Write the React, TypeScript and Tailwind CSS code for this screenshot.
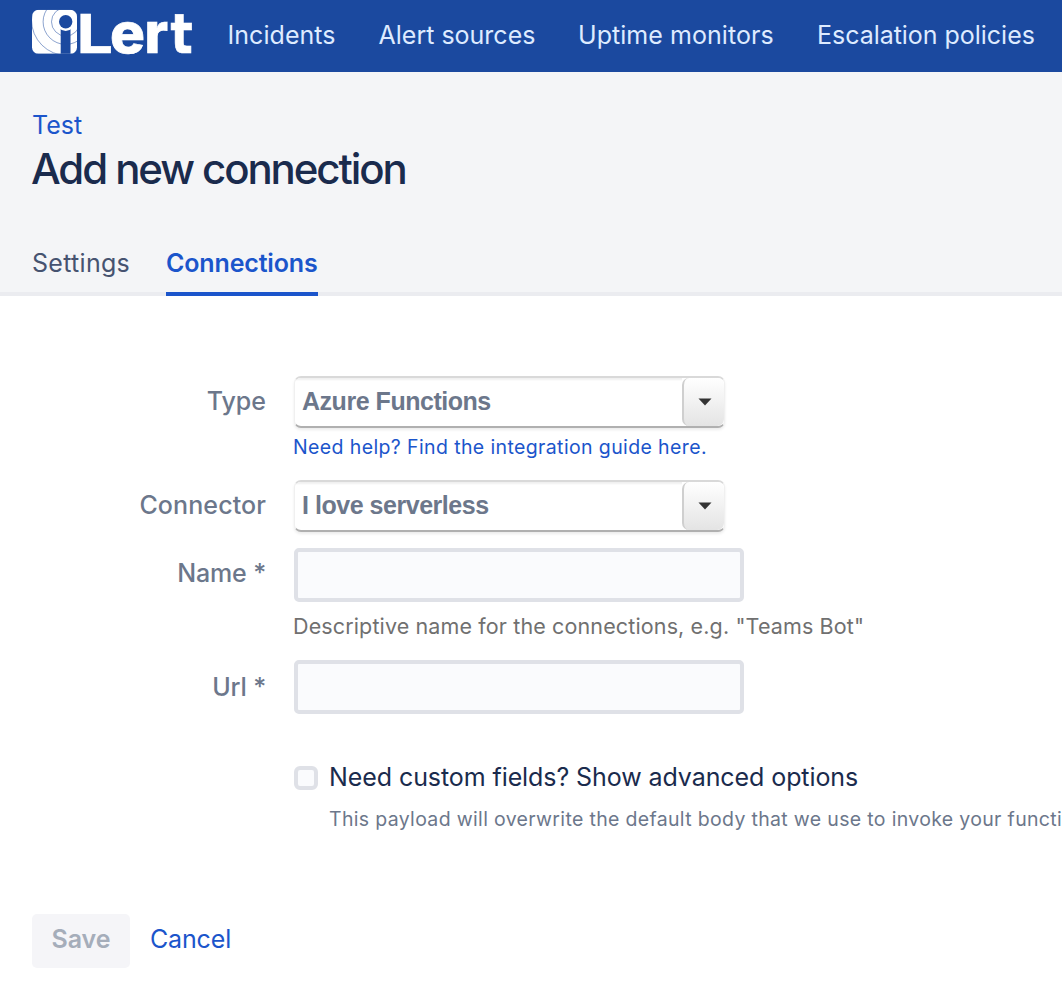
import type { ReactNode } from "react";

function Logo() {
  return (
    <svg width="163" height="72" viewBox="32 0 163 72" aria-label="iLert" className="shrink-0 overflow-visible">
      <defs>
        <clipPath id="mark">
          <rect x="32" y="9.8" width="45" height="44" rx="6.5" />
        </clipPath>
      </defs>
      <g clipPath="url(#mark)">
        <rect x="32" y="9.8" width="45" height="44" fill="#fff" />
        <g fill="none" stroke="#1b499f" strokeOpacity="0.5" strokeWidth="1">
          <circle cx="65.7" cy="21.8" r="14.2" />
          <circle cx="65.7" cy="21.8" r="22.6" />
          <circle cx="67" cy="20" r="35.5" />
        </g>
        <rect x="60.7" y="28" width="9.8" height="27" fill="#1b499f" />
        <circle cx="65.7" cy="21.8" r="9.2" fill="#fff" />
        <circle cx="65.7" cy="21.8" r="6.7" fill="#1b499f" />
      </g>
      <g fill="#fff" stroke="#fff" strokeWidth="0.7" fontFamily="Inter, sans-serif" fontWeight="800">
        <text x="76.8" y="53.2" fontSize="53" fontWeight="700" textLength="36" lengthAdjust="spacingAndGlyphs">L</text>
        <text x="110" y="53.2" fontSize="56" textLength="35" lengthAdjust="spacingAndGlyphs">e</text>
        <text x="144.5" y="53.2" fontSize="56">r</text>
        <text x="170.6" y="53.2" fontSize="55" fontFamily="'DejaVu Sans', sans-serif" fontWeight="700" textLength="22.2" lengthAdjust="spacingAndGlyphs">t</text>
      </g>
    </svg>
  );
}

function Row({ label, labelClass, className, children }: { label: string; labelClass: string; className: string; children: ReactNode }) {
  return (
    <div className={`flex items-start gap-7 ${className}`}>
      <label className={`w-[266px] shrink-0 text-right font-medium leading-8 text-[#6c778b] ${labelClass}`}>{label}</label>
      <div className="flex flex-col items-start">{children}</div>
    </div>
  );
}

function Combo({ value }: { value: string }) {
  return (
    <button className="flex h-[52px] w-[431px] items-stretch overflow-hidden rounded-[7px] border-x border-t-2 border-b-2 border-x-[#f0f0f0] border-t-[#d9d9d9] border-b-[#b0b0b0] bg-white text-left shadow-[0_2px_3px_rgba(0,0,0,0.08)]">
      <span className="flex-1 pl-[7px] font-['Liberation_Sans',sans-serif] text-[25px] font-bold leading-[47px] tracking-[-0.47px] text-[#6c778b] shadow-[inset_0_3px_2px_-1px_#f0f0f0]">
        {value}
      </span>
      <span className="flex w-[42px] items-center justify-center rounded-[7px] border-l-2 border-[#cfcfcf] bg-linear-to-b from-white to-[#e4e4e4]">
        <svg width="14" height="8" viewBox="0 0 14 8" className="ml-0.5">
          <path d="M0.5 0.5h13L7 7.5z" fill="#333" />
        </svg>
      </span>
    </button>
  );
}

function TextField() {
  return <input className="h-[54px] w-[450px] rounded-[5px] border-4 border-[#dfe1e7] bg-[#fafbfd] px-3 outline-none" />;
}

export default function App() {
  return (
    <div className="h-[982px] w-[1062px] overflow-hidden bg-white font-[Inter,sans-serif] text-[25px]">
      <header className="flex h-[72px] items-center bg-[#1b499f] pl-8 leading-8 whitespace-nowrap text-[#deebff]">
        <Logo />
        <nav className="flex items-center pb-0.5">
          <a className="ml-[32.5px] w-[151px] tracking-[0.05px]">Incidents</a>
          <a className="w-[199.5px]">Alert sources</a>
          <a className="w-[239px] tracking-[0.05px]">Uptime monitors</a>
          <a className="tracking-[-0.03px]">Escalation policies</a>
        </nav>
      </header>

      <section className="flex h-56 flex-col border-b-4 border-[#ebecf0] bg-[#f4f5f7] px-8 pt-[37px]">
        <a className="leading-8 text-[#1b55cb]">Test</a>
        <h1 className="mt-1 -ml-px text-[42px] leading-[48px] font-[450] tracking-[-2.1px] text-[#1a2b4d]">Add new connection</h1>
        <div className="mt-[54px] flex gap-9 leading-8">
          <a className="w-[98px] tracking-[0.3px] text-[#465370]">Settings</a>
          <a className="h-[49px] w-[152px] shrink-0 border-b-4 border-[#1b55cb] font-semibold tracking-[-0.15px] whitespace-nowrap text-[#1b55cb]">
            Connections
          </a>
        </div>
      </section>

      <main className="pt-20">
        <Row label="Type" labelClass="pt-[9px]" className="h-[104px]">
          <Combo value="Azure Functions" />
          <a className="mt-[7px] -ml-px text-[19.5px] leading-6 tracking-[0.38px] whitespace-nowrap text-[#1b55cb]">
            Need help? Find the integration guide here.
          </a>
        </Row>
        <Row label="Connector" labelClass="pt-[9px] tracking-[0.1px]" className="h-[68px]">
          <Combo value="I love serverless" />
        </Row>
        <Row label="Name *" labelClass="pt-[9px] tracking-[-0.15px]" className="h-28">
          <TextField />
          <p className="mt-2.5 -ml-px text-[21.5px] leading-7 tracking-[0.13px] whitespace-nowrap text-[#707070]">
            Descriptive name for the connections, e.g. "Teams Bot"
          </p>
        </Row>
        <Row label="Url *" labelClass="pt-[11px] tracking-[-0.15px]" className="h-[101px]">
          <TextField />
        </Row>
        <div className="ml-[294px] flex gap-[11px]">
          <span className="mt-[5px] size-6 shrink-0 rounded-[6px] border-4 border-[#dfe1e7] bg-[#fafbfd]" />
          <div className="whitespace-nowrap">
            <p className="leading-8 tracking-[-0.08px] text-[#1a2b4d]">Need custom fields? Show advanced options</p>
            <p className="mt-3.5 text-[19.5px] leading-6 tracking-[0.33px] text-[#6c778b]">
              This payload will overwrite the default body that we use to invoke your functi
            </p>
          </div>
        </div>
        <div className="mt-[83px] flex items-center pl-8">
          <button className="h-[54px] w-[98px] rounded-[5px] bg-[#f5f5f8] pb-[3px] font-semibold text-[#a5adba]">Save</button>
          <a className="ml-5 pb-[3px] tracking-[-0.15px] text-[#1b55cb]">Cancel</a>
        </div>
      </main>
    </div>
  );
}
